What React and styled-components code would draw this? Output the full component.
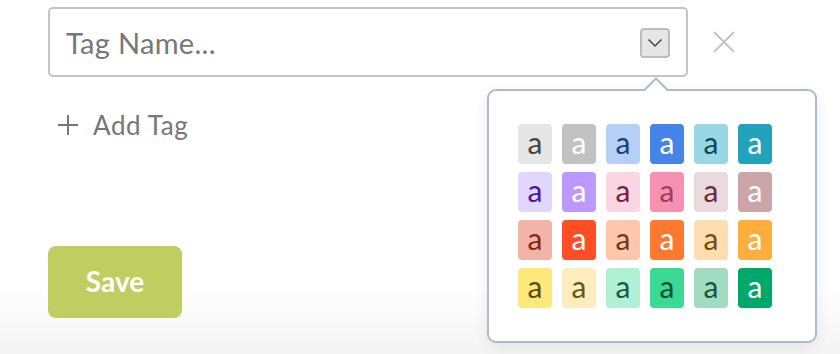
import React from "react";
import styled, { createGlobalStyle } from "styled-components";

const GlobalStyle = createGlobalStyle`
  html, body {
    margin: 0;
    padding: 0;
  }
  body {
    min-height: 354px;
    font-family: "Lato", "Noto Sans", sans-serif;
    background: linear-gradient(to bottom, #ffffff 0, #ffffff 285px, #f4f4f4 354px);
  }
`;

const Page = styled.div`
  padding: 7px 0 0 48px;
  display: flex;
  flex-direction: column;
`;

const TagRow = styled.div`
  display: flex;
  align-items: center;
  gap: 25px;
`;

const Field = styled.div`
  position: relative;
  box-sizing: border-box;
  width: 640px;
  height: 70px;
  border: 2px solid #c4c4c4;
  border-radius: 5px;
  display: flex;
  align-items: center;
  padding: 0 16px 0 16px;
`;

const NameInput = styled.input`
  flex: 1;
  border: none;
  outline: none;
  background: transparent;
  font-family: inherit;
  font-size: 29px;
  letter-spacing: 0.3px;
  color: #333;
  padding: 0;

  &::placeholder {
    color: #777777;
  }
`;

const DropButton = styled.button`
  box-sizing: border-box;
  width: 30px;
  height: 30px;
  padding: 0;
  border: 2px solid #bdbdbd;
  border-radius: 4px;
  background: #e6e6e6;
  display: flex;
  align-items: center;
  justify-content: center;
  margin-top: 2px;
`;

const CloseButton = styled.button`
  border: none;
  background: none;
  padding: 0;
  width: 22px;
  height: 22px;
  display: flex;
`;

const Popover = styled.div`
  position: absolute;
  top: 80px;
  left: 437px;
  width: 330px;
  height: 254px;
  box-sizing: border-box;
  background: #fff;
  border: 2px solid #a9bdcf;
  border-radius: 9px;
  box-shadow: 0 4px 14px rgba(0, 0, 0, 0.08);
  padding: 33px 0 0 29px;
  z-index: 2;

  &::before,
  &::after {
    content: "";
    position: absolute;
    left: 154px;
    width: 0;
    height: 0;
    border-left: 13px solid transparent;
    border-right: 13px solid transparent;
  }
  &::before {
    top: -14px;
    border-bottom: 13px solid #a9bdcf;
  }
  &::after {
    top: -11px;
    border-bottom: 13px solid #fff;
  }
`;

const Swatches = styled.div`
  display: grid;
  grid-template-columns: repeat(6, 34px);
  grid-auto-rows: 40px;
  column-gap: 10px;
  row-gap: 8px;
`;

const Swatch = styled.div`
  border-radius: 4px;
  background: ${(p) => p.$bg};
  color: ${(p) => p.$fg};
  display: flex;
  align-items: center;
  justify-content: center;
  font-size: 30px;
  line-height: 1;
  padding-bottom: 5px;
  box-sizing: border-box;
`;

const AddTag = styled.div`
  display: flex;
  align-items: center;
  gap: 15px;
  margin: 32px 0 0 10px;
  color: #777777;
  font-size: 26px;
  letter-spacing: 0.6px;
`;

const SaveButton = styled.button`
  margin-top: 105px;
  width: 134px;
  height: 72px;
  border: none;
  border-radius: 8px;
  background: #bfce60;
  color: #fff;
  font-family: inherit;
  font-weight: 700;
  font-size: 28px;
  padding: 0 0 2px;
`;

const swatches = [
  ["#e6e6e6", "#444444"],
  ["#c2c2c2", "#ffffff"],
  ["#b5cff7", "#1b3f7c"],
  ["#4585e8", "#ffffff"],
  ["#97d8e4", "#0d4a57"],
  ["#22a2bc", "#ffffff"],
  ["#e2d6fe", "#4a17a0"],
  ["#bb99fe", "#ffffff"],
  ["#fbd5e2", "#7a1e3f"],
  ["#f791b2", "#a23b5e"],
  ["#eadadd", "#6b2a38"],
  ["#cba5a8", "#ffffff"],
  ["#f2b3a9", "#8a2512"],
  ["#ff4d24", "#ffffff"],
  ["#ffc6ae", "#7a3514"],
  ["#ff782f", "#ffffff"],
  ["#ffddaf", "#7a4b0e"],
  ["#ffad3b", "#ffffff"],
  ["#fce87b", "#5c4e0a"],
  ["#fdedbe", "#6a5812"],
  ["#b2f0d6", "#135e3d"],
  ["#3bd994", "#0b5333"],
  ["#a1dcc2", "#135a39"],
  ["#00a86a", "#ffffff"],
];

export default function App() {
  return (
    <>
      <GlobalStyle />
      <Page>
        <TagRow>
          <Field>
            <NameInput placeholder="Tag Name..." />
            <DropButton aria-label="Choose colour">
              <svg width="16" height="10" viewBox="0 0 16 10" fill="none">
                <path d="M1.5 1.5 L8 8 L14.5 1.5" stroke="#444" strokeWidth="1.5" />
              </svg>
            </DropButton>
            <Popover>
              <Swatches>
                {swatches.map(([bg, fg], i) => (
                  <Swatch key={i} $bg={bg} $fg={fg}>
                    a
                  </Swatch>
                ))}
              </Swatches>
            </Popover>
          </Field>
          <CloseButton aria-label="Remove">
            <svg width="22" height="22" viewBox="0 0 22 22" fill="none">
              <path d="M1 1 L21 21 M21 1 L1 21" stroke="#c4c4c4" strokeWidth="2" />
            </svg>
          </CloseButton>
        </TagRow>
        <AddTag>
          <svg width="20" height="20" viewBox="0 0 20 20" fill="none">
            <path d="M10 0 V20 M0 10 H20" stroke="#777" strokeWidth="2" />
          </svg>
          Add Tag
        </AddTag>
        <div>
          <SaveButton>Save</SaveButton>
        </div>
      </Page>
    </>
  );
}
